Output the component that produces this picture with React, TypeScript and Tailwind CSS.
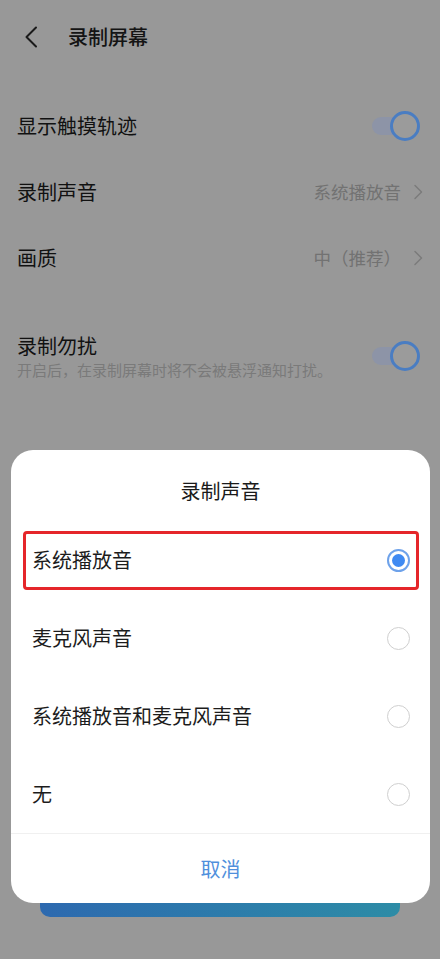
const font = { fontFamily: '"Noto Sans CJK SC", "Noto Sans", sans-serif' }

const options = ['系统播放音', '麦克风声音', '系统播放音和麦克风声音', '无']

const Chevron = () => (
  <svg width="10" height="16" viewBox="0 0 10 16" fill="none" className="ml-[12px]">
    <path d="M2 1.5 L8.5 8 L2 14.5" stroke="#7a7a7a" strokeWidth="1.4" strokeLinecap="round" strokeLinejoin="round" />
  </svg>
)

const Toggle = () => (
  <div className="relative w-[50px] h-[30px] flex items-center">
    <div className="absolute left-[2px] w-[38px] h-[18px] rounded-full bg-[#8d94a7]" />
    <div className="absolute right-0 w-[30px] h-[30px] rounded-full border-[3px] border-[#4a7dc2] bg-[#9b9b9b]" />
  </div>
)

const Radio = ({ on }: { on: boolean }) =>
  on ? (
    <div className="w-[23px] h-[23px] rounded-full border-2 border-[#6ea2ea] flex items-center justify-center">
      <div className="w-[13px] h-[13px] rounded-full bg-[#3f8af2]" />
    </div>
  ) : (
    <div className="w-[23px] h-[23px] rounded-full border-[1.5px] border-[#cfcfcf]" />
  )

const App = () => {
  return (
    <div className="relative w-[440px] h-[959px] bg-[#989898] overflow-hidden flex flex-col" style={font}>
      {/* header */}
      <div className="h-[74px] flex items-center pl-[24px]">
        <svg width="14" height="22" viewBox="0 0 14 22" fill="none">
          <path d="M12 1.5 L2.5 11 L12 20.5" stroke="#1a1a1a" strokeWidth="2" strokeLinecap="round" strokeLinejoin="round" />
        </svg>
        <span className="ml-[30px] text-[20px] font-medium text-[#141414]">录制屏幕</span>
      </div>

      <div className="pt-[19px] px-[17px]">
        <div className="h-[66px] flex items-center justify-between">
          <span className="text-[20px] text-[#111]">显示触摸轨迹</span>
          <div className="mr-[3px]"><Toggle /></div>
        </div>
        <div className="h-[66px] flex items-center justify-between">
          <span className="text-[20px] text-[#111]">录制声音</span>
          <div className="flex items-center">
            <span className="text-[17.5px] text-[#727272]">系统播放音</span>
            <Chevron />
          </div>
        </div>
        <div className="h-[66px] flex items-center justify-between">
          <span className="text-[20px] text-[#111]">画质</span>
          <div className="flex items-center">
            <span className="text-[17.5px] text-[#727272]">中（推荐）</span>
            <Chevron />
          </div>
        </div>
        <div className="pt-[41px] flex items-center justify-between">
          <div className="flex flex-col">
            <span className="text-[20px] leading-[28px] text-[#111]">录制勿扰</span>
            <span className="text-[15px] leading-[20px] text-[#7a7a7a]">开启后，在录制屏幕时将不会被悬浮通知打扰。</span>
          </div>
          <div className="mr-[3px]"><Toggle /></div>
        </div>
      </div>

      {/* bottom button behind the sheet */}
      <div className="mt-auto mb-[42px] mx-[40px] h-[50px] rounded-[10px] bg-gradient-to-r from-[#2d69af] to-[#2d8ca6]" />

      {/* sheet */}
      <div className="absolute left-[11px] right-[10px] bottom-[56px] bg-white rounded-[22px] flex flex-col">
        <div className="h-[71px] pt-[29px] text-center text-[20px] leading-[24px] text-[#1a1a1a]">录制声音</div>
        {options.map((item, idx) => (
          <div key={idx} className="h-[78px] pl-[12px] pr-[11px] flex items-center">
            <div
              className={
                idx === 0
                  ? 'flex-1 h-[59px] flex items-center justify-between pl-[6px] pr-[6px] border-[3px] border-[#e5262a] rounded-[4px]'
                  : 'flex-1 h-[59px] flex items-center justify-between pl-[6px] pr-[6px] border-[3px] border-transparent'
              }
            >
              <span className="text-[20px] text-[#1c1c1c]">{item}</span>
              <Radio on={idx === 0} />
            </div>
          </div>
        ))}
        <div className="h-px bg-[#f0f0f0]" />
        <div className="h-[69px] flex items-center justify-center text-[20px] text-[#4f8fdc]">取消</div>
      </div>
    </div>
  )
}

export default App
